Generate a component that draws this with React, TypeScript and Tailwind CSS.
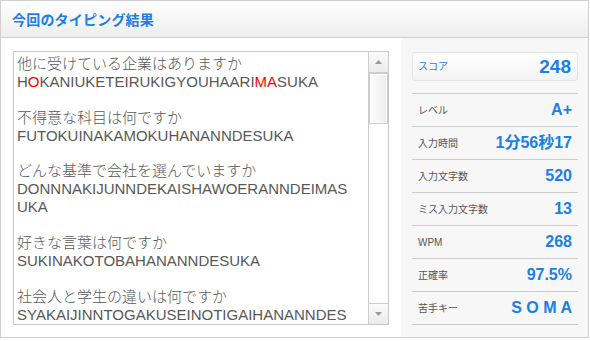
import React from 'react';

// Result rows on the right side
const rows = [
  { label: 'レベル', value: 'A+' },
  { label: '入力時間', value: '1分56秒17' },
  { label: '入力文字数', value: '520' },
  { label: 'ミス入力文字数', value: '13' },
  { label: 'WPM', value: '268' },
  { label: '正確率', value: '97.5%' },
  { label: '苦手キー', value: 'S O M A' },
];

const questions: { ja: string; roma: React.ReactNode }[] = [
  {
    ja: '他に受けている企業はありますか',
    roma: (
      <>
        H<span className="text-[#ff0000]">O</span>KANIUKETEIRUKIGYOUHAARI
        <span className="text-[#ff0000]">MA</span>SUKA
      </>
    ),
  },
  { ja: '不得意な科目は何ですか', roma: 'FUTOKUINAKAMOKUHANANNDESUKA' },
  { ja: 'どんな基準で会社を選んでいますか', roma: 'DONNNAKIJUNNDEKAISHAWOERANNDEIMASUKA' },
  { ja: '好きな言葉は何ですか', roma: 'SUKINAKOTOBAHANANNDESUKA' },
  { ja: '社会人と学生の違いは何ですか', roma: 'SYAKAIJINNTOGAKUSEINOTIGAIHANANNDESUKA' },
];

const font = "font-['Liberation_Sans','Noto_Sans_CJK_JP',sans-serif]";

const App: React.FC = () => {
  return (
    <div className={`w-[590px] h-[341px] bg-white ${font}`}>
      <div className="w-[589px] h-[338px] border border-[#cfcfcf] flex flex-col">
        {/* Header */}
        <div className="h-[37px] border-b border-[#cfcfcf] bg-linear-to-b from-white to-[#ededed] flex items-center pl-[11px] pt-[2px]">
          <h2 className="text-[14px] font-bold text-[#1a7fe6] tracking-[0.2px]">今回のタイピング結果</h2>
        </div>

        <div className="flex-1 flex">
          {/* Typed text box */}
          <div className="pt-[13px] pl-[12px] pr-[12px]">
            <div className="w-[376px] h-[274px] border border-[#c8c8c8] flex">
              <div className="flex-1 overflow-hidden pl-[3px] pr-[15px] pt-[3px] text-[15px] leading-[17.9px] text-[#585858] font-light break-all">
                {questions.map((q, i) => (
                  <div key={i}>
                    <div>{q.ja}</div>
                    <div className="font-normal">{q.roma}</div>
                    <div>&nbsp;</div>
                  </div>
                ))}
              </div>

              {/* Scrollbar */}
              <div className="w-[20px] border-l border-[#cccccc] flex flex-col bg-white">
                <div className="h-[21px] border-b border-[#cccccc] bg-linear-to-b from-[#fbfbfb] to-[#ebebeb] flex items-center justify-center">
                  <svg width="7" height="4" viewBox="0 0 7 4">
                    <path d="M3.5 0 L7 4 L0 4 Z" fill="#9a9a9a" />
                  </svg>
                </div>
                <div className="h-[51px] border border-[#cccccc] bg-linear-to-r from-[#fdfdfd] to-[#ededed] shadow-[inset_0_0_0_1px_#ffffff]" />
                <div className="flex-1" />
                <div className="h-[21px] border-t border-[#cccccc] bg-linear-to-b from-[#fbfbfb] to-[#ebebeb] flex items-center justify-center">
                  <svg width="7" height="4" viewBox="0 0 7 4">
                    <path d="M0 0 L7 0 L3.5 4 Z" fill="#9a9a9a" />
                  </svg>
                </div>
              </div>
            </div>
          </div>

          {/* Result panel */}
          <div className="flex-1 bg-[#f7f7f7] pt-[14px] pl-[11px] pr-[10px]">
            <div className="h-[29px] rounded-[3px] border border-[#e4e4e4] bg-linear-to-b from-white to-[#f3f3f3] flex items-center justify-between pl-[5px] pr-[6px]">
              <span className="text-[10px] text-[#1a7fe6]">スコア</span>
              <span className="text-[19px] font-bold text-[#1a7fe6] leading-none">248</span>
            </div>
            <div className="mt-[12px] border-t border-[#cccccc]">
              {rows.map((r) => (
                <div
                  key={r.label}
                  className="h-[33px] border-b border-[#cccccc] flex items-center justify-between pl-[6px] pr-[6px]"
                >
                  <span className="text-[10px] text-[#555555]">{r.label}</span>
                  <span className="text-[16px] font-bold text-[#1a7fe6] leading-none whitespace-pre">{r.value}</span>
                </div>
              ))}
            </div>
          </div>
        </div>
      </div>
    </div>
  );
};

export default App;
